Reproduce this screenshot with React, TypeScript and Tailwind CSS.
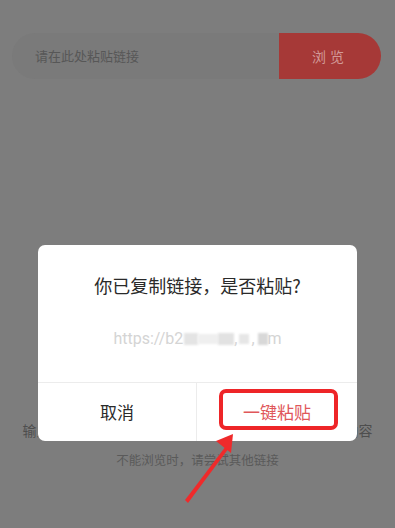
export default function App() {
  const font = { fontFamily: '"Noto Sans CJK SC", "Noto Sans", sans-serif' }

  return (
    <div className="relative w-[395px] h-[528px] overflow-hidden bg-[#7d7d7d]" style={font}>
      {/* page behind the overlay */}
      <div className="flex flex-col">
        <div className="flex pt-[33px] pl-[12px] pr-[14px]">
          <div className="flex-1 h-[46px] rounded-l-full bg-[#7a7a7a] flex items-center pl-[23px] text-[13px] text-[#575757]">
            请在此处粘贴链接
          </div>
          <div className="w-[102px] h-[46px] rounded-r-full bg-[#a63937] flex items-center justify-center text-[14px] text-[#d29a98] tracking-[4px]">
            浏览
          </div>
        </div>
        <div className="mt-[341px] text-center text-[14px] leading-[20px] text-[#4e4e4e]">
          输入链接后，点击浏览即可在此处查看链接中的网页内容
        </div>
        <div className="mt-[11px] text-center text-[12.5px] leading-[18px] text-[#5a5a5a]">
          不能浏览时，请尝试其他链接
        </div>
      </div>

      {/* dialog */}
      <div className="absolute left-[38px] top-[245px] w-[319px] h-[196px] bg-white rounded-[7px] flex flex-col">
        <div className="h-[137px] flex flex-col items-center">
          <div className="mt-[26px] text-[18px] leading-[28px] text-[#2a2a2a]">你已复制链接，是否粘贴?</div>
          <div className="mt-[29px] flex items-center text-[16px] leading-[22px] text-[#d4d4d4]" style={{ fontFamily: 'Roboto, "Noto Sans", sans-serif' }}>
            <span>https://b2</span>
            <span className="w-[14px] h-[12px] bg-[#e4e4e4] blur-[1px] ml-[1px]" />
            <span className="w-[20px] h-[10px] bg-[#efefef] blur-[1px]" />
            <span className="w-[16px] h-[12px] bg-[#e2e2e2] blur-[1px]" />
            <span>,</span>
            <span className="w-[10px] h-[10px] bg-[#e6e6e6] blur-[1px] ml-[2px]" />
            <span className="ml-[2px]">,</span>
            <span className="w-[10px] h-[12px] bg-[#d8d8d8] blur-[1px] ml-[3px]" />
            <span>m</span>
          </div>
        </div>
        <div className="flex-1 flex border-t border-[#ececec]">
          <div className="w-[159px] flex items-center justify-center text-[17px] text-[#2a2a2a] border-r border-[#ececec]">
            取消
          </div>
          <div className="flex-1 flex items-center justify-center text-[17px] text-[#e0575a]">
            一键粘贴
          </div>
        </div>
      </div>

      {/* annotation */}
      <div className="absolute left-[219px] top-[389px] w-[119px] h-[41px] border-[4px] border-[#ee2528] rounded-[7px]" />
      <svg className="absolute left-0 top-0" width="395" height="528" viewBox="0 0 395 528">
        <path d="M185 500 L226 446 L229 448 L188 503 Z" fill="#ef2a2b" />
        <polygon points="233,434 216,441 231,453" fill="#ef2a2b" />
      </svg>
    </div>
  )
}
